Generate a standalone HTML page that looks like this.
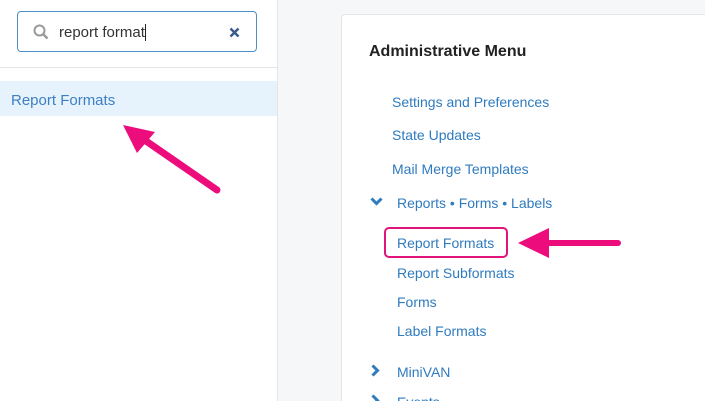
<!DOCTYPE html>
<html style="overflow:hidden;height:401px"><head><style>
body{margin:0;width:705px;height:401px;overflow:hidden;background:#f6f7f9;font-family:"Liberation Sans",sans-serif;position:relative}
.left{position:absolute;left:0;top:0;width:277px;height:401px;background:#fff;border-right:1px solid #e3e5e8}
.search{position:absolute;left:17px;top:11px;width:240px;height:41px;border:1px solid #4a8fc9;border-radius:4px;box-sizing:border-box}
.search span{position:absolute;left:41px;top:12px;font-size:15px;color:#333}
.hr{position:absolute;left:0;top:67px;width:277px;height:1px;background:#e3e5e8}
.hl{position:absolute;left:0;top:81px;width:277px;height:35px;background:#e6f3fc}
.hl span{position:absolute;left:11px;top:11px;font-size:15px;color:#3d7fc5}
.clip{position:absolute;left:0;top:0;width:705px;height:401px;overflow:hidden}
.card{position:absolute;left:341px;top:14px;width:380px;height:420px;background:#fff;border:1px solid #e3e5e8;border-radius:4px}
.t{position:absolute;left:369px;top:43px;font-size:16px;font-weight:bold;color:#222}
.l{position:absolute;left:392px;font-size:14px;color:#2f7bbf;white-space:nowrap}
.box{position:absolute;left:384px;top:227px;width:124px;height:31px;border:2px solid #e0147a;border-radius:5px;box-sizing:border-box}
</style></head><body>
<div class="left">
<div class="search">
<svg style="position:absolute;left:15px;top:12px" width="16" height="16" viewBox="0 0 16 16"><circle cx="6.5" cy="6.5" r="5" fill="none" stroke="#999" stroke-width="2"/><line x1="10" y1="10" x2="14.5" y2="14.5" stroke="#999" stroke-width="2.4"/></svg>
<span>report format<span style="position:static;border-right:1px solid #222"></span></span>
<svg style="position:absolute;left:211px;top:15px" width="11" height="11" viewBox="0 0 11 11"><path d="M1.5 1.5L9.5 9.5M9.5 1.5L1.5 9.5" stroke="#3a5a8c" stroke-width="2.4"/></svg>
</div>
<div class="hr"></div>
<div class="hl"><span>Report Formats</span></div>
</div>
<div class="clip">
<div class="card"></div>
<div class="t">Administrative Menu</div>
<div class="l" style="top:94px">Settings and Preferences</div>
<div class="l" style="top:127px">State Updates</div>
<div class="l" style="top:161px">Mail Merge Templates</div>
<svg style="position:absolute;left:370px;top:197px" width="13" height="9" viewBox="0 0 13 9"><path d="M1.5 1.5L6.5 6.5L11.5 1.5" fill="none" stroke="#2f7bbf" stroke-width="3"/></svg>
<div class="l" style="top:195px;left:397px">Reports • Forms • Labels</div>
<div class="box"></div>
<div class="l" style="top:235px;left:397px">Report Formats</div>
<div class="l" style="top:265px;left:397px">Report Subformats</div>
<div class="l" style="top:294px;left:397px">Forms</div>
<div class="l" style="top:323px;left:397px">Label Formats</div>
<svg style="position:absolute;left:371px;top:364px" width="9" height="13" viewBox="0 0 9 13"><path d="M1.5 1.5L6.5 6.5L1.5 11.5" fill="none" stroke="#2f7bbf" stroke-width="3"/></svg>
<div class="l" style="top:364px;left:397px">MiniVAN</div>
<svg style="position:absolute;left:371px;top:394px" width="9" height="13" viewBox="0 0 9 13"><path d="M1.5 1.5L6.5 6.5L1.5 11.5" fill="none" stroke="#2f7bbf" stroke-width="3"/></svg>
<div class="l" style="top:394px;left:397px">Events</div>
</div>
<svg style="position:absolute;left:0;top:0" width="705" height="401">
<line x1="618" y1="243" x2="535" y2="243" stroke="#ec0c7c" stroke-width="6" stroke-linecap="round"/>
<path d="M518 243L549 228L549 258Z" fill="#ec0c7c"/>
<line x1="217" y1="190" x2="146" y2="141" stroke="#ec0c7c" stroke-width="7" stroke-linecap="round"/>
<path d="M123 125L155 132L137 153Z" fill="#ec0c7c"/>
</svg>
</body></html>
